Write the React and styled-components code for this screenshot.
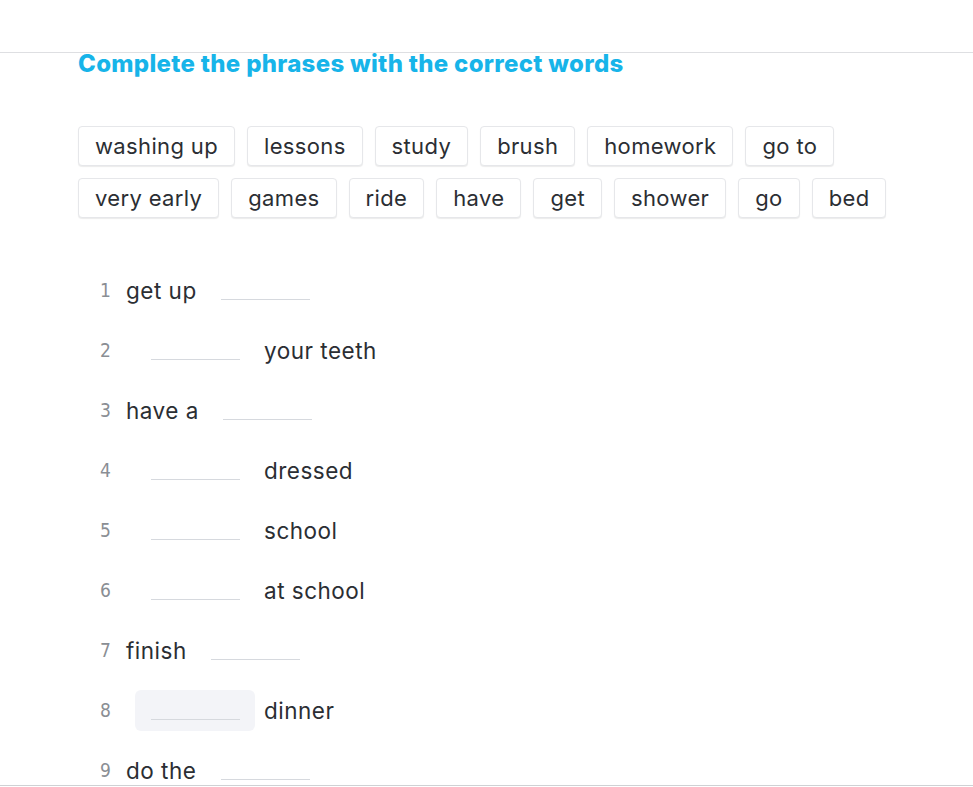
import React from 'react';
import styled, { createGlobalStyle } from 'styled-components';

const GlobalStyle = createGlobalStyle`
  html, body {
    margin: 0;
    padding: 0;
    background: #ffffff;
  }
  body {
    font-family: Inter, "Noto Sans", sans-serif;
    color: #2b2e33;
  }
`;

const words = [
  ['washing up', 'lessons', 'study', 'brush', 'homework', 'go to'],
  ['very early', 'games', 'ride', 'have', 'get', 'shower', 'go', 'bed'],
];

// each phrase: before text, after text (blank sits between)
const phrases = [
  { before: 'get up', after: '' },
  { before: '', after: 'your teeth' },
  { before: 'have a', after: '' },
  { before: '', after: 'dressed' },
  { before: '', after: 'school' },
  { before: '', after: 'at school' },
  { before: 'finish', after: '' },
  { before: '', after: 'dinner', active: true },
  { before: 'do the', after: '' },
];

const App = () => {
  return (
    <>
      <GlobalStyle />
      <TopBar />
      <Frame>
        <Content>
          <Title>Complete the phrases with the correct words</Title>
          <WordBank>
            {words.map((row, i) => (
              <WordRow key={i}>
                {row.map((w) => (
                  <Chip key={w}>{w}</Chip>
                ))}
              </WordRow>
            ))}
          </WordBank>
          <List>
            {phrases.map((p, i) => (
              <Item key={i}>
                <Num>{i + 1}</Num>
                {p.before && <Phrase>{p.before}</Phrase>}
                <Blank $active={p.active}>
                  <BlankLine />
                </Blank>
                {p.after && <Phrase>{p.after}</Phrase>}
              </Item>
            ))}
          </List>
        </Content>
      </Frame>
    </>
  );
};

export default App;

const TopBar = styled.div`
  height: 52px;
  border-bottom: 1px solid #dedfe2;
`;

// clips only the bottom edge, where the list runs past the frame
const Frame = styled.div`
  display: flow-root;
  height: 732px;
  clip-path: inset(-20px 0 0 0);
  border-bottom: 1px solid #cfd1d4;
`;

const Content = styled.div`
  display: flow-root;
  padding: 0 78px;
`;

const Title = styled.h1`
  margin: -3px 0 0;
  line-height: 28px;
  font-size: 24px;
  font-weight: 800;
  letter-spacing: 0.3px;
  white-space: nowrap;
  color: #17b4e9;
`;

const WordBank = styled.div`
  display: flex;
  flex-direction: column;
  gap: 12px;
  margin-top: 48px;
`;

const WordRow = styled.div`
  display: flex;
  gap: 12px;
`;

const Chip = styled.div`
  height: 40px;
  box-sizing: border-box;
  padding: 0 16px;
  display: flex;
  align-items: center;
  background: #ffffff;
  border: 1px solid #e6e7ea;
  border-radius: 4px;
  box-shadow: 0 1px 1px rgba(0, 0, 0, 0.08);
  font-size: 22px;
  letter-spacing: 0.35px;
  color: #2b2e33;
`;

const List = styled.div`
  margin-top: 42px;
  display: flex;
  flex-direction: column;
`;

const Item = styled.div`
  height: 60px;
  display: flex;
  align-items: center;
  padding-left: 22px;
`;

const Num = styled.span`
  width: 26px;
  font-family: "DejaVu Sans", Roboto, sans-serif;
  font-stretch: condensed;
  font-size: 19px;
  font-weight: 400;
  color: #8a8e94;
  flex-shrink: 0;
`;

const Phrase = styled.span`
  font-size: 22.5px;
  letter-spacing: 0.5px;
  color: #2b2e33;
  white-space: nowrap;
`;

const Blank = styled.div`
  width: 120px;
  height: 41px;
  margin: 0 9px;
  flex-shrink: 0;
  border-radius: 6px;
  background: ${(p) => (p.$active ? '#f3f4f8' : 'transparent')};
  display: flex;
  align-items: flex-end;
  justify-content: center;
  padding-bottom: 11px;
  box-sizing: border-box;
`;

const BlankLine = styled.div`
  width: 89px;
  height: 1px;
  background: #d6d9de;
`;
